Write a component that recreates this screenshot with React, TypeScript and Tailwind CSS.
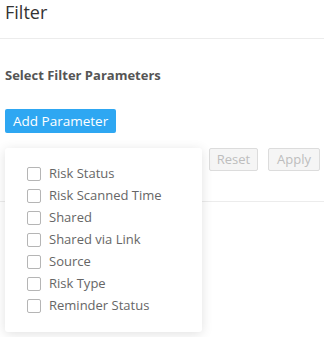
const params = [
    'Risk Status',
    'Risk Scanned Time',
    'Shared',
    'Shared via Link',
    'Source',
    'Risk Type',
    'Reminder Status',
];

export default function App() {
    return (
        <div className="relative w-[324px] h-[337px] bg-white overflow-hidden font-['Open_Sans',sans-serif] text-[#333]">
            {/* Header */}
            <div className="h-[39px] border-b border-[#ececec] px-[5px] pt-[1px]">
                <h1 className="text-[18px] leading-[22px] text-[#333]">Filter</h1>
            </div>

            <div className="pl-[5px] pr-[4px]">
                <h2 className="mt-[28px] text-[13px] leading-[16px] font-bold text-[#555]">Select Filter Parameters</h2>

                <button className="mt-[26px] h-[24px] px-[8px] bg-[#2ea7f2] text-white text-[13.5px] leading-[24px] rounded-[2px]">
                    Add Parameter
                </button>

                <div className="mt-[15px] flex justify-end gap-[10px]">
                    <button disabled className="h-[23px] w-[49px] border border-[#dcdcdc] bg-[#f5f5f5] text-[#bdbdbd] text-[13px] leading-[21px] rounded-[2px]">
                        Reset
                    </button>
                    <button disabled className="h-[23px] w-[52px] border border-[#dcdcdc] bg-[#f5f5f5] text-[#bdbdbd] text-[13px] leading-[21px] rounded-[2px]">
                        Apply
                    </button>
                </div>
            </div>

            <div className="mt-[30px] border-b border-[#ececec]" />

            {/* Dropdown menu */}
            <div className="absolute left-[5px] top-[148px] w-[197px] h-[184px] bg-white rounded-[3px] shadow-[0_2px_12px_rgba(0,0,0,0.12)] py-[15px] pl-[22px]">
                {params.map((p) => (
                    <label key={p} className="flex items-center h-[22px] gap-[8px]">
                        <span className="w-[14px] h-[14px] border border-[#b5b5b5] rounded-[2px] bg-white" />
                        <span className="text-[13px] text-[#666]">{p}</span>
                    </label>
                ))}
            </div>
        </div>
    );
}
